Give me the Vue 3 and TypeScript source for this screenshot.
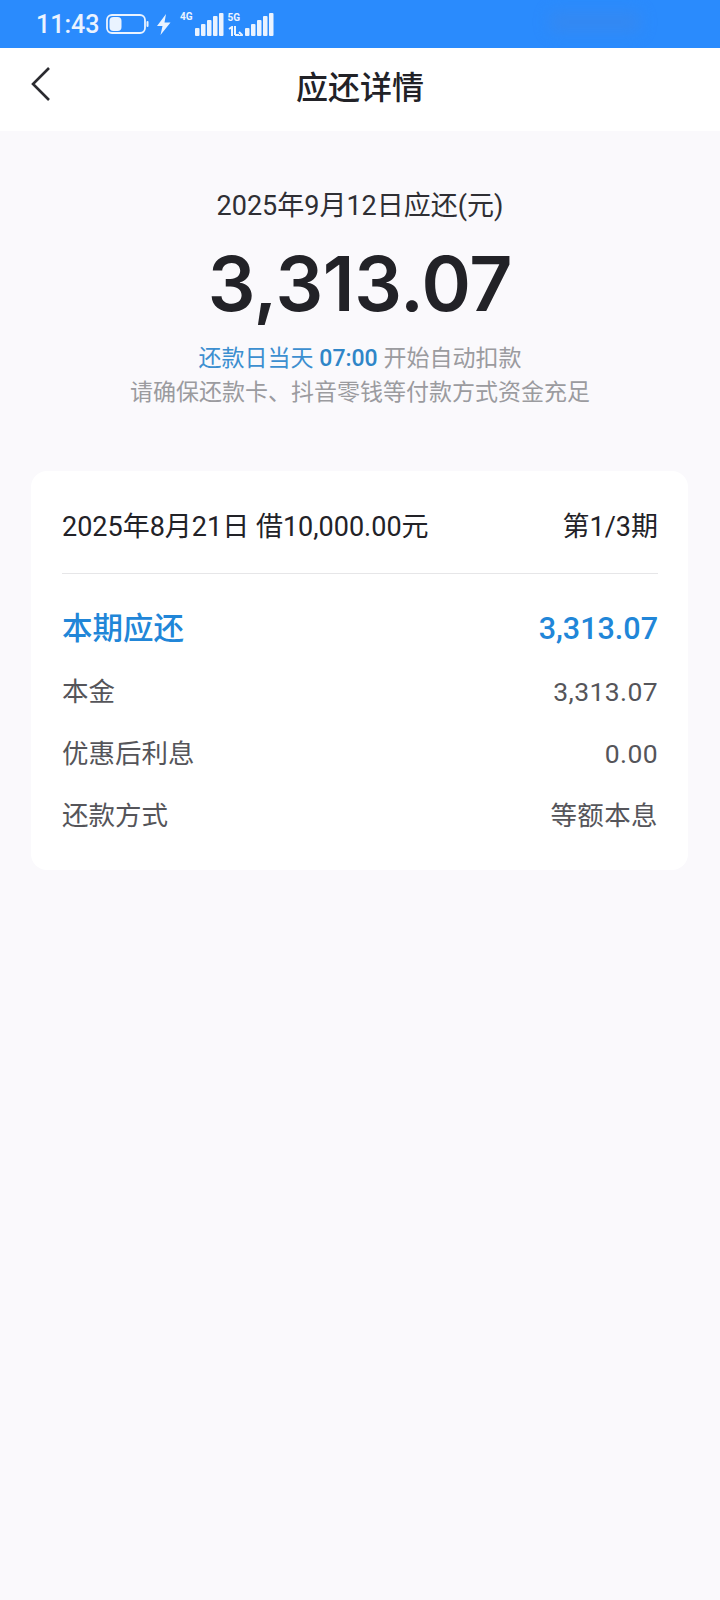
<template>
  <div class="page">
    <div class="status-bar">
      <span class="clock">11:43</span>
      <svg class="battery" width="43" height="20" viewBox="0 0 43 20">
        <rect x="1" y="1" width="38" height="18" rx="5" fill="none" stroke="#eaf3ff" stroke-width="1.8" />
        <rect x="3.5" y="3" width="12" height="14" rx="4" fill="#eaf3ff" />
        <rect x="40.5" y="7" width="2" height="6" rx="1" fill="#eaf3ff" />
      </svg>
      <svg class="bolt" width="15" height="21" viewBox="0 0 15 21">
        <path d="M10 0 L1 12 H6.5 L4.5 21 L14.5 8.5 H8.5 Z" fill="#eaf3ff" />
      </svg>
      <div class="signal first">
        <span class="net">4G</span>
        <svg width="29" height="23" viewBox="0 0 29 23">
          <rect v-for="bar in bars" :key="bar.x" :x="bar.x" :y="23 - bar.h" width="4.5" :height="bar.h" rx="1" fill="#eaf3ff" />
        </svg>
      </div>
      <div class="signal">
        <div class="net-stack">
          <span class="net">5G</span>
          <svg width="15" height="10" viewBox="0 0 15 10">
            <path d="M1 3 L4 1 V10 M7 0 V9 M7 9 L11 9 M11 6 L14 9 L11 10" fill="none" stroke="#eaf3ff" stroke-width="2" />
          </svg>
        </div>
        <svg width="29" height="23" viewBox="0 0 29 23">
          <rect v-for="bar in bars" :key="bar.x" :x="bar.x" :y="23 - bar.h" width="4.5" :height="bar.h" rx="1" fill="#eaf3ff" />
        </svg>
      </div>
      <div class="smudge"></div>
    </div>

    <header class="nav-bar">
      <svg class="back" width="24" height="38" viewBox="0 0 24 38">
        <path d="M20 3 L4 19 L20 35" fill="none" stroke="#2b2b30" stroke-width="2.6" />
      </svg>
      <h1 class="title">应还详情</h1>
    </header>

    <section class="summary">
      <p class="due-date">2025年9月12日应还(元)</p>
      <p class="amount">3,313.07</p>
      <p class="hint"><span class="hint-blue">还款日当天 <b>07:00</b></span> 开始自动扣款</p>
      <p class="hint">请确保还款卡、抖音零钱等付款方式资金充足</p>
    </section>

    <section class="card">
      <div class="card-head">
        <span>2025年8月21日 借10,000.00元</span>
        <span>第1/3期</span>
      </div>
      <div class="row row-main">
        <span>本期应还</span>
        <span class="value">3,313.07</span>
      </div>
      <div v-for="row in rows" :key="row.label" class="row">
        <span>{{ row.label }}</span>
        <span class="value">{{ row.value }}</span>
      </div>
    </section>
  </div>
</template>

<script setup lang="ts">
interface DetailRow {
  label: string;
  value: string;
}

const bars = [
  { x: 0, h: 8 },
  { x: 6, h: 12 },
  { x: 12, h: 16 },
  { x: 18, h: 20 },
  { x: 24, h: 23 },
];

const rows: DetailRow[] = [
  { label: '本金', value: '3,313.07' },
  { label: '优惠后利息', value: '0.00' },
  { label: '还款方式', value: '等额本息' },
];
</script>

<style>
body {
  background-color: #faf9fc;
}
</style>

<style scoped>
.page {
  min-height: 1600px;
  background-color: #faf9fc;
  font-family: Roboto, "Noto Sans CJK SC", sans-serif;
}

p,
h1 {
  margin: 0;
}

.status-bar {
  position: relative;
  display: flex;
  align-items: center;
  height: 48px;
  padding-left: 36px;
  background-color: #2a8bfd;
  color: #eaf3ff;
  overflow: hidden;
}

.clock {
  font-size: 25px;
  font-weight: 500;
  width: 70px;
}

.bolt {
  margin-left: 7px;
}

.signal {
  display: flex;
  align-items: flex-end;
  gap: 2px;
  margin-left: 4px;
  height: 24px;
}

.signal.first {
  margin-left: 9px;
}

.net {
  font-size: 10px;
  font-weight: 700;
  line-height: 10px;
  align-self: flex-start;
}

.net-stack {
  display: flex;
  flex-direction: column;
  justify-content: space-between;
  height: 23px;
}

.smudge {
  position: absolute;
  left: 550px;
  top: 12px;
  width: 90px;
  height: 20px;
  background-color: #3f86e6;
  opacity: 0.5;
  filter: blur(8px);
}

.nav-bar {
  position: relative;
  display: flex;
  align-items: center;
  justify-content: center;
  height: 83px;
  background-color: #fff;
}

.back {
  position: absolute;
  left: 29px;
  top: 17px;
}

.title {
  font-size: 32px;
  font-weight: 500;
  color: #222227;
  padding-bottom: 10px;
}

.summary {
  display: flex;
  flex-direction: column;
  align-items: center;
  padding-top: 57px;
}

.due-date {
  font-size: 27px;
  line-height: 36px;
  color: #2f2f34;
}

.amount {
  font-family: Inter, Roboto, sans-serif;
  font-size: 75px;
  font-weight: 600;
  line-height: 100px;
  letter-spacing: -0.3px;
  color: #222227;
  margin-top: 10px;
  margin-bottom: 8px;
}

.hint {
  font-size: 23px;
  line-height: 34px;
  color: #9b9b9f;
}

.hint-blue {
  color: #3c8fd0;
}

.hint-blue b {
  font-weight: 500;
  color: #2f86c8;
}

.card {
  margin: 61px 32px 0 31px;
  padding: 20px 30px 23px 31px;
  background-color: #fff;
  border-radius: 16px;
}

.card-head {
  display: flex;
  justify-content: space-between;
  align-items: center;
  height: 66px;
  padding-bottom: 16px;
  border-bottom: 1.5px solid #e6e6e8;
  font-size: 27px;
  color: #222227;
}

.row {
  display: flex;
  justify-content: space-between;
  align-items: baseline;
  height: 62px;
  line-height: 62px;
  font-size: 26.5px;
  color: #55555a;
}

.row-main {
  height: 65px;
  line-height: 65px;
  margin-top: 22px;
  font-size: 30.5px;
  font-weight: 500;
  color: #2186d8;
}

.value {
  letter-spacing: 0.4px;
}

.row-main .value {
  letter-spacing: 0;
}
</style>
